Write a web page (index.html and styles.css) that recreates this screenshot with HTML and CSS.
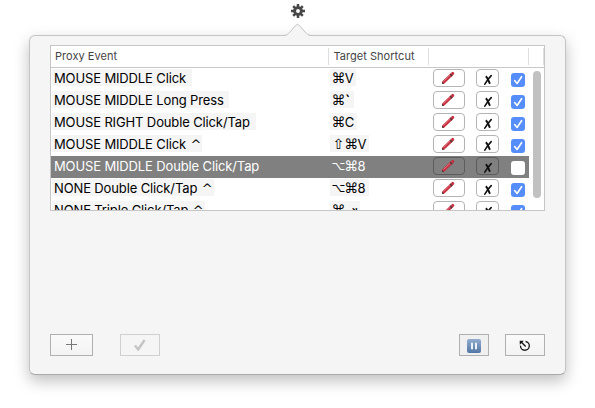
FILE: index.html
```html
<!DOCTYPE html>
<html lang="en">
<head>
<meta charset="utf-8">
<title>Proxy Events</title>
<link rel="stylesheet" href="styles.css">
</head>
<body>
<svg class="defs" width="0" height="0" aria-hidden="true">
  <defs>
    <symbol id="pencil" viewBox="0 0 14 14"><path d="M2.4 11.4 11.8 2.4" stroke="#c5303f" stroke-width="2.9" stroke-linecap="round"/><path d="M2.4 10.6 10.5 2.8" stroke="#e8808a" stroke-width=".8"/><path d="m1 13 .4-2 1.5 1.4z" fill="#333"/><path d="m9.1 3 2 2.2" stroke="#55383b" stroke-width="1.3"/></symbol>
    <symbol id="cross" viewBox="0 0 10 12"><path d="M2.8 2.2C4.8 3.6 5.6 7.5 7 9.8" stroke="#111" stroke-width="2" fill="none"/><path d="M8.2 1.6C5.8 4 3.8 7 1.8 10.2" stroke="#111" stroke-width="1.6" fill="none" stroke-linecap="round"/></symbol>
    <symbol id="tick" viewBox="0 0 14 14"><path d="m3.6 7.5 2.5 3L10.6 3.7" stroke="#fff" stroke-width="1.6" fill="none" stroke-linecap="round" stroke-linejoin="round"/></symbol>
  </defs>
</svg>
<svg class="gear" viewBox="0 0 14 14"><g stroke="#484848" stroke-width="2.5"><path d="M7 0v14M0 7h14M2.2 2.2l9.6 9.6M11.8 2.2l-9.6 9.6"/></g><circle cx="7" cy="7" r="3.4" fill="#fff" stroke="#484848" stroke-width="2.9"/></svg>
<main class="popover">
  <svg class="arrow" viewBox="0 0 30 15"><path d="M0 14C4 14 5 12 7 10L12.5 3.5Q14.5 1 16.5 3.5L22 10C24 12 25 14 29 14V15H0Z" fill="#f5f5f5"/><path d="M0 13.5C4 13.5 5 12 7 10L12.5 3.5Q14.5 1 16.5 3.5L22 10C24 12 25 13.5 29 13.5" fill="none" stroke="#c4c4c4"/></svg>
  <section class="table">
    <header class="head"><span>Proxy Event</span><span>Target Shortcut</span><span></span><span></span></header>
    <div class="rows" id="rows"></div>
    <div class="scrollbar"></div>
  </section>
  <footer class="actions">
    <button class="btn add" aria-label="Add"><svg width="12" height="12" viewBox="0 0 12 12"><path d="M5.5 0v11M0 5.5h11" stroke="#777"/></svg></button>
    <button class="btn confirm" aria-label="Confirm"><svg width="12" height="12" viewBox="0 0 12 12"><path d="m1 6.5 3.2 4L10.6 1" stroke="#c4c4c4" stroke-width="2.4" fill="none"/></svg></button>
    <button class="btn pause" aria-label="Pause"><svg width="14" height="14" viewBox="0 0 14 14"><defs><linearGradient id="blue" x2="0" y2="1"><stop stop-color="#93add0"/><stop offset="1" stop-color="#5276a4"/></linearGradient></defs><rect width="14" height="14" rx="2" fill="url(#blue)"/><path d="M5 3.8v6.4M9 3.8v6.4" stroke="#edf2f8" stroke-width="2"/></svg></button>
    <button class="btn quit" aria-label="Quit"><svg width="12" height="12" viewBox="0 0 12 12"><path d="M6.6 1.5A4.4 4.4 0 1 1 1.5 5.6M6.7 6.5 2 1.8" fill="none" stroke="#111" stroke-width="1.3"/><path d="M.7.7h4.1L.8 4.8z" fill="#111"/></svg></button>
  </footer>
</main>
<script src="script.js"></script>
</body>
</html>
```
FILE: styles.css
```css
* { box-sizing: border-box; }
body {
  margin: 0;
  height: 408px;
  overflow: hidden;
  background: #fff;
  font-family: Inter, "DejaVu Sans", sans-serif;
}
.defs { position: absolute; }
.gear { display: block; width: 14px; height: 14px; margin: 4px 0 0 291px; }
.popover {
  position: relative;
  width: 537px;
  height: 340px;
  margin: 17px 0 0 29px;
  padding: 9px 20px 0;
  border: 1px solid #c4c4c4;
  border-bottom-color: #aaa;
  border-radius: 6px;
  background: #f5f5f5;
  box-shadow: 0 6px 15px rgba(0, 0, 0, .25);
  display: flex;
  flex-direction: column;
}
.arrow { position: absolute; left: 253px; top: -14px; width: 30px; height: 15px; }
.table {
  position: relative;
  width: 495px;
  height: 166px;
  border: 1px solid #c6c6c6;
  background: #fff;
  overflow: hidden;
}
.head {
  display: grid;
  grid-template-columns: 278px 100px 100px 15px;
  align-items: center;
  height: 22px;
  border-bottom: 1px solid #c8c8c8;
  font-size: 11px;
  color: #444;
}
.head span { height: 17px; line-height: 17px; padding-left: 4px; border-right: 1px solid #ddd; white-space: nowrap; letter-spacing: .03px; }
.head span + span { padding-left: 4.5px; }
.row {
  display: grid;
  grid-template-columns: 279px 103px 43px 35px 18px;
  width: 478px;
  height: 22px;
  padding-top: 1px;
  font-size: 13px;
  line-height: 19px;
  letter-spacing: -.13px;
  color: #000;
  white-space: nowrap;
}
.label {
  display: block;
  height: 17px;
  margin-left: 1px;
  padding-left: 2px;
  background: #f5f5f5;
}
.keys { margin-left: 0; display: flex; padding-left: 2px; }
.keys i {
  display: flex;
  justify-content: center;
  width: 12.8px;
  font: 14px/18px "DejaVu Sans", sans-serif;
  letter-spacing: 0;
}
.keys .option { font-size: 12px; }
.keys .tab { font-size: 14px; line-height: 18px; width: 14px; }
.keys .grave { font-size: 18px; line-height: 22px; }
.caret { margin-left: 1px; font: 13px/19px "DejaVu Sans", sans-serif; vertical-align: top; }
.mini { display: flex; align-items: center; justify-content: center; height: 18px; border: 1px solid #b4b4b4; border-radius: 4px; background: #fff; }
.edit { width: 32px; }
.edit svg { width: 14px; height: 14px; margin-right: 2px; }
.remove { width: 23px; }
.remove svg { width: 10px; height: 12px; margin-top: 3px; }
.check { width: 14px; height: 14px; margin-top: 4px; border-radius: 3px; background: #558dfa; }
.check svg { display: block; width: 14px; height: 14px; }
.selected { background: #808080; color: #fff; }
.selected .label { background: none; }
.selected .mini { background: none; border-color: #5c5c5c; }
.selected .check { background: #fff; }
.selected .check svg { display: none; }
.scrollbar { position: absolute; right: 3px; top: 25px; width: 8px; height: 127px; border-radius: 4px; background: #c1c1c1; }
.actions { display: flex; margin-top: 123px; }
.btn { display: flex; align-items: center; justify-content: center; height: 22px; padding: 0; border: 1px solid #b0b0b0; background: linear-gradient(#fafafa, #f3f3f3); }
.add { width: 43px; }
.confirm { width: 40px; margin-left: 27px; border-color: #d0d0d0; background: #f5f5f5; }
.pause { width: 30px; margin-left: 299px; background: #f0f0f0; }
.pause svg { margin-top: 2px; margin-right: 1px; }
.quit { width: 40px; margin-left: 16px; }
.quit svg { margin-top: 1px; }
```
FILE: script.js
```js
const rows = [
  ["MOUSE MIDDLE Click", 140, "⌘V", 26],
  ["MOUSE MIDDLE Long Press", 177, "⌘`", 24],
  ["MOUSE RIGHT Double Click/Tap", 204, "⌘C", 27],
  ["MOUSE MIDDLE Click ^", 150, "⇧⌘V", 39],
  ["MOUSE MIDDLE Double Click/Tap", 213, "⌥⌘8", 39],
  ["NONE Double Click/Tap ^", 162, "⌥⌘8", 39],
  ["NONE Triple Click/Tap ^", 153, "⌘⇥", 30]
];
const glyphs = { "⌘": "command", "⌥": "option", "⇧": "shift", "⇥": "tab" };
const keys = s => [...s].map(c => glyphs[c] ? `<i class="${glyphs[c]}">${c}</i>` : `<span${c === "`" ? ' class="grave"' : ""}>${c}</span>`).join("");
document.getElementById("rows").innerHTML = rows.map(([name, w, shortcut, sw], i) => `
  <div class="row${i === 4 ? " selected" : ""}">
    <span class="label" style="width:${w}px">${name.replace("^", '<span class="caret">^</span>')}</span>
    <span class="label keys" style="width:${sw}px">${keys(shortcut)}</span>
    <div class="mini edit"><svg><use href="#pencil"/></svg></div>
    <div class="mini remove"><svg><use href="#cross"/></svg></div>
    <div class="check"><svg><use href="#tick"/></svg></div>
  </div>`).join("");
```
